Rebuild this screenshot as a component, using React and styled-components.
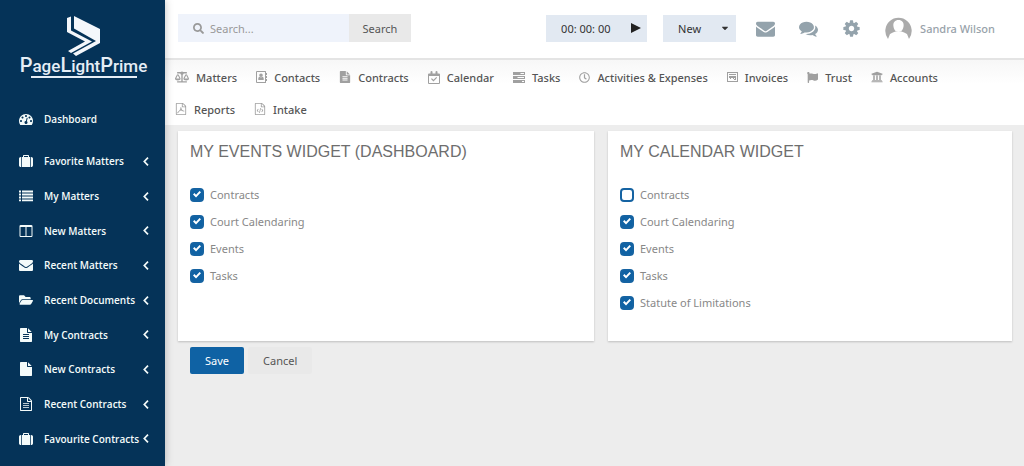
import { useState } from "react";
import styled, { createGlobalStyle } from "styled-components";
import {
  FaBalanceScale,
  FaCaretDown,
  FaFlag,
  FaFolderOpen,
  FaRegClock,
  FaSearch,
  FaUniversity,
} from "react-icons/fa";

const GlobalStyle = createGlobalStyle`
  * {
    box-sizing: border-box;
  }
  body {
    margin: 0;
    background: #ededed;
    font-family: "Noto Sans", "Open Sans", sans-serif;
    font-size: 11px;
    color: #555;
  }
  button, input {
    font: inherit;
    color: inherit;
  }
  button {
    border: 0;
    cursor: pointer;
  }
  a {
    color: inherit;
    text-decoration: none;
  }
  svg {
    flex-shrink: 0;
  }
`;

const Glyph = ({ d, size = 14, width = size, box = "0 0 1792 1792" }) => (
  <svg width={width} height={size} viewBox={box} fill="currentColor" fillRule="evenodd" aria-hidden="true">
    <path d={d} />
  </svg>
);

const paths = {
  gauge:
    "M384 1152q0-53-37.5-90.5t-90.5-37.5-90.5 37.5-37.5 90.5 37.5 90.5 90.5 37.5 90.5-37.5 37.5-90.5zm192-448q0-53-37.5-90.5t-90.5-37.5-90.5 37.5-37.5 90.5 37.5 90.5 90.5 37.5 90.5-37.5 37.5-90.5zm428 481l101-382q6-26-7.5-48.5t-38.5-29.5-48 6.5-30 39.5l-101 382q-60 5-107 43.5t-63 98.5q-20 77 20 146t117 89 146-20 89-117q16-60-6-117t-72-91zm660-33q0-53-37.5-90.5t-90.5-37.5-90.5 37.5-37.5 90.5 37.5 90.5 90.5 37.5 90.5-37.5 37.5-90.5zm-640-640q0-53-37.5-90.5t-90.5-37.5-90.5 37.5-37.5 90.5 37.5 90.5 90.5 37.5 90.5-37.5 37.5-90.5zm448 192q0-53-37.5-90.5t-90.5-37.5-90.5 37.5-37.5 90.5 37.5 90.5 90.5 37.5 90.5-37.5 37.5-90.5zm320 448q0 261-141 483-19 29-54 29h-1402q-35 0-54-29-141-221-141-483 0-182 71-348t191-286 286-191 348-71 348 71 286 191 191 286 71 348z",
  suitcase:
    "M640 384h512v-128h-512v128zm-352 0v1280h-64q-92 0-158-66t-66-158v-832q0-92 66-158t158-66h64zm1120 0v1280h-1024v-1280h128v-160q0-40 28-68t68-28h576q40 0 68 28t28 68v160h128zm384 224v832q0 92-66 158t-158 66h-64v-1280h64q92 0 158 66t66 158z",
  list: "M0 200h256v240H0zM384 200h1408v240H384zM0 580h256v240H0zM384 580h1408v240H384zM0 960h256v240H0zM384 960h1408v240H384zM0 1340h256v240H0zM384 1340h1408v240H384z",
  columns:
    "M224 1536h608v-1152h-640v1120q0 13 9.5 22.5t22.5 9.5zm1376-32v-1120h-640v1152h608q13 0 22.5-9.5t9.5-22.5zm128-1216v1216q0 66-47 113t-113 47h-1344q-66 0-113-47t-47-113v-1216q0-66 47-113t113-47h1344q66 0 113 47t47 113z",
  envelope:
    "M1792 710v794q0 66-47 113t-113 47h-1472q-66 0-113-47t-47-113v-794q44 49 101 87 362 246 497 345 57 42 92.5 65.5t94.5 48 110 24.5h2q51 0 110-24.5t94.5-48 92.5-65.5q170-123 498-345 57-39 100-87zm0-294q0 79-49 151t-122 123q-376 261-468 325-10 7-42.5 31t-54 38.5-52 32.5-57.5 27-50 9h-2q-23 0-50-9t-57.5-27-52-32.5-54-38.5-42.5-31q-91-64-262-182.5t-205-142.5q-62-42-117-115.5t-55-136.5q0-78 41.5-130t118.5-52h1472q65 0 112.5 47t47.5 113z",
  file: "M1596 476q14 14 28 36h-472v-472q22 14 36 28zm-476 164h544v1056q0 40-28 68t-68 28h-1344q-40 0-68-28t-28-68v-1600q0-40 28-68t68-28h800v544q0 40 28 68t68 28z",
  fileLines:
    "M1596 476q14 14 28 36h-472v-472q22 14 36 28zm-476 164h544v1056q0 40-28 68t-68 28h-1344q-40 0-68-28t-28-68v-1600q0-40 28-68t68-28h800v544q0 40 28 68t68 28zm160 736v-64q0-14-9-23t-23-9h-704q-14 0-23 9t-9 23v64q0 14 9 23t23 9h704q14 0 23-9t9-23zm0-256v-64q0-14-9-23t-23-9h-704q-14 0-23 9t-9 23v64q0 14 9 23t23 9h704q14 0 23-9t9-23zm0-256v-64q0-14-9-23t-23-9h-704q-14 0-23 9t-9 23v64q0 14 9 23t23 9h704q14 0 23-9t9-23z",
  fileOutline:
    "M1596 380q28 28 48 76t20 88v1152q0 40-28 68t-68 28h-1344q-40 0-68-28t-28-68v-1600q0-40 28-68t68-28h896q40 0 88 20t76 48zm-444-244v376h376q-10-29-22-41l-313-313q-12-12-41-22zm384 1528v-1024h-416q-40 0-68-28t-28-68v-416h-768v1536h1280z",
  comments:
    "M1408 768q0 139-94 257t-256.5 186.5-353.5 68.5q-86 0-176-16-124 88-278 128-36 9-86 16h-3q-11 0-20.5-8t-11.5-21q-1-3-1-6.5t.5-6.5 2-6l2.5-5 3.5-5.5 4-5 4.5-5 4-4.5q5-6 23-25t26-29.5 22.5-29 25-38.5 20.5-44q-124-72-195-177t-71-224q0-139 94-257t256.5-186.5 353.5-68.5 353.5 68.5 256.5 186.5 94 257zm384 256q0 120-71 224.5t-195 176.5q10 24 20.5 44t25 38.5 22.5 29 26 29.5 23 25q1 1 4 4.5t4.5 5 4 5 3.5 5.5l2.5 5 2 6 .5 6.5-1 6.5q-3 14-13 22t-22 7q-50-7-86-16-154-40-278-128-90 16-176 16-271 0-472-132 58 4 88 4 161 0 309-45t264-129q125-92 192-212t67-254q0-77-23-152 129 71 204 178t75 230z",
  cog: "M1152 896q0-106-75-181t-181-75-181 75-75 181 75 181 181 75 181-75 75-181zm512-109v222q0 12-8 23t-20 13l-185 28q-19 54-39 91 35 50 107 138 10 12 10 25t-9 23q-27 37-99 108t-94 71q-12 0-26-9l-138-108q-44 23-91 38-16 136-29 186-7 28-36 28h-222q-14 0-24.5-8.5t-11.5-21.5l-28-184q-49-16-90-37l-141 107q-10 9-25 9-14 0-25-11-126-114-165-168-7-10-7-23 0-12 8-23 15-21 51-66.5t54-70.5q-27-50-41-99l-183-27q-13-2-21-12.5t-8-23.5v-222q0-12 8-23t19-13l186-28q14-46 39-92-40-57-107-138-10-12-10-24 0-10 9-23 26-36 98.5-107.5t94.5-71.5q13 0 26 10l138 107q44-23 91-38 16-136 29-186 7-28 36-28h222q14 0 24.5 8.5t11.5 21.5l28 184q49 16 90 37l142-107q9-9 24-9 13 0 25 10 129 119 165 170 7 8 7 22 0 12-8 23-15 21-51 66.5t-54 70.5q26 50 41 98l183 28q13 2 21 12.5t8 23.5z",
  tasks:
    "M0 2h12v3H0zM0 6h12v3H0zM0 10h12v3H0zM7.500 3v1H11V3zM4.500 7v1H11V7zM9 11v1h2v-1z",
  invoice:
    "M0 2h11v10H0zM1 3v8h9V3zM2 4h7v1H2zM2 6h7v3H8V8H7v1H6V8H4v1H3V8H2zM7 9h2v1H7z",
  contacts:
    "M1 1h8.500q.5 0 .5.500V3h1v2h-1v1h1v2h-1v1h1v2h-1v1.500q0 .5-.5.500H1q-1 0-1-1V2q0-1 1-1zM1 2v10h8V2zM5 3.500a1.700 1.700 0 0 1 0 3.600 1.700 1.700 0 0 1 0-3.600zM2.300 10V8.500Q2.500 7 3.500 6.800q1.500 1 3 0 1 .2 1.200 1.700V10z",
  calendar:
    "M1 2.500h1.500V1q0-1 1-1t1 1v1.500h3V1q0-1 1-1t1 1v1.500H11q1 0 1 1V12q0 1-1 1H1q-1 0-1-1V3.500q0-1 1-1zM1 5v7h10V5zM3 8l.8-.8L5.500 8.800 8.300 6l.8.800-3.600 3.600z",
};

const lines = "M512 800h768v96H512zM512 1056h768v96H512zM512 1312h768v96H512z";
const acrobat =
  "M820 640h110q50 260 120 380 120 130 340 130v110q-220 10-420-90-180 20-310 80-130 260-260 280-80 0-60-90 60-120 250-230 150-210 230-420-20-80 0-150zm60 330l-110 180 210-50z";
const code =
  "M600 860l90 70-140 190 140 190-90 70-190-260zM1190 860l-90 70 140 190-140 190 90 70 190-260zM930 760l110 20-170 720-110-20z";

const Layout = styled.div`
  display: flex;
  min-height: 100vh;
`;

const Sidebar = styled.aside`
  display: flex;
  flex-direction: column;
  flex: 0 0 165px;
  min-width: 0;
  padding-bottom: 10px;
  background: #053358;
  color: #f4fbfa;
  box-shadow: 0 0 8px rgba(0, 0, 0, 0.25);
  z-index: 1;
`;

const Logo = styled.a`
  display: flex;
  flex-direction: column;
  align-items: center;
  height: 101px;
  padding: 15px 0 0 2px;
`;

const LogoName = styled.span`
  font-family: Roboto, sans-serif;
  font-size: 17px;
  font-weight: 500;
  line-height: 16px;
  white-space: nowrap;
  color: #e6eef6;

  b {
    font-size: 20px;
    font-weight: 500;
  }
`;

const LogoRule = styled.span`
  width: 106px;
  height: 2px;
  margin-top: 2px;
  background: #e6eef6;
`;

const SideLink = styled.a`
  display: grid;
  grid-template-columns: 25px 1fr 6px;
  align-items: center;
  flex: ${({ $fixed }) => ($fixed ? "0 0 35px" : "1 0 30px")};
  padding: 0 16px 0 19px;
  font-family: "Open Sans", "Noto Sans", sans-serif;
  font-size: 10px;
  font-weight: 600;
  white-space: nowrap;
`;

const SideMenu = styled.nav`
  display: flex;
  flex-direction: column;
  flex: 1;
`;

const SideGroup = styled.div`
  display: flex;
  flex-direction: column;
  flex: 1;
  margin-top: 8px;
`;

const Page = styled.div`
  flex: 1;
  min-width: 0;
`;

const TopBar = styled.header`
  display: flex;
  align-items: center;
  height: 60px;
  padding: 0 29px 2px 13px;
  background: #fff;
  border-bottom: 2px solid #e4e4e4;
`;

const SearchForm = styled.form`
  display: flex;
  margin-right: auto;
`;

const SearchField = styled.label`
  display: flex;
  align-items: center;
  gap: 6px;
  width: 171px;
  height: 28px;
  padding-left: 15px;
  background: #eff3fb;
  color: #999;

  input {
    flex: 1;
    min-width: 0;
    padding: 0;
    border: 0;
    outline: 0;
    background: none;
  }
  input::placeholder {
    color: #999;
  }
`;

const SearchButton = styled.button`
  width: 62px;
  padding: 0;
  background: #e9e9e9;
`;

const ToolButton = styled.button`
  display: flex;
  align-items: center;
  justify-content: space-between;
  width: ${({ $width }) => $width}px;
  height: 27px;
  margin-right: ${({ $gap }) => $gap}px;
  padding: 0 6px 0 15px;
  background: #e2e9f2;
  color: #333;
`;

const IconButton = styled.button`
  display: flex;
  align-items: center;
  margin-right: 24px;
  padding: 0;
  background: none;
  color: #94a3ac;
`;

const User = styled.a`
  display: flex;
  align-items: center;
  gap: 8px;
  color: #98a2aa;
  font-weight: 500;
`;

const MainNav = styled.nav`
  display: flex;
  flex-wrap: wrap;
  column-gap: 19px;
  padding: 1px 60px 0 10px;
  background: linear-gradient(#f7f7f7, #fff 24px);
`;

const NavLink = styled.a`
  display: flex;
  align-items: center;
  gap: 7px;
  height: 32px;
  font-weight: 500;

  svg {
    color: #a0a0a0;
  }
`;

const Widgets = styled.main`
  display: grid;
  grid-template-columns: 416fr 404fr;
  gap: 14px;
  padding: 6px 12px 6px 13px;
`;

const Card = styled.section`
  min-height: 210px;
  padding-bottom: 24px;
  background: #fff;
  box-shadow: 0 1px 2px rgba(0, 0, 0, 0.2);
`;

const CardTitle = styled.h2`
  margin: 0 0 8px;
  padding: 0 12px;
  font-family: "Liberation Sans", Arial, sans-serif;
  font-size: 16px;
  font-weight: 400;
  line-height: 42px;
  color: #6e6e6e;
`;

const Option = styled.label`
  display: flex;
  align-items: center;
  gap: 6px;
  height: 27px;
  padding-left: 12px;
  color: #888;
`;

const Checkbox = styled.input`
  appearance: none;
  display: grid;
  place-items: center;
  width: 14px;
  height: 14px;
  margin: 0;
  border: 2px solid #1563a2;
  border-radius: 4px;
  background: #fff;

  &:checked {
    background: #0f62a4;
  }
  &:checked::after {
    content: "";
    width: 8px;
    height: 7px;
    background: #fff;
    clip-path: polygon(0 50%, 18% 30%, 38% 52%, 82% 0, 100% 18%, 38% 92%);
  }
`;

const Actions = styled.div`
  display: flex;
  gap: 4px;
  padding-left: 25px;
`;

const ActionButton = styled.button`
  height: 27px;
  padding: 0 15px;
  border-radius: 2px;
  background: ${({ $primary }) => ($primary ? "#0f62a4" : "#e9e9e9")};
  color: ${({ $primary }) => ($primary ? "#fff" : "#555")};
`;

const sideItems = [
  ["Favorite Matters", <Glyph d={paths.suitcase} />],
  ["My Matters", <Glyph d={paths.list} />],
  ["New Matters", <Glyph d={paths.columns} />],
  ["Recent Matters", <Glyph d={paths.envelope} />],
  ["Recent Documents", <FaFolderOpen size={14} />],
  ["My Contracts", <Glyph d={paths.fileLines} />],
  ["New Contracts", <Glyph d={paths.file} />],
  ["Recent Contracts", <Glyph d={paths.fileOutline + lines} />],
  ["Favourite Contracts", <Glyph d={paths.suitcase} />],
];

const navItems = [
  ["Matters", <FaBalanceScale size={14} />],
  ["Contacts", <Glyph d={paths.contacts} size={14} width={11} box="0 0 11 14" />],
  ["Contracts", <Glyph d={paths.fileLines} size={12} />],
  ["Calendar", <Glyph d={paths.calendar} size={13} width={12} box="0 0 12 13" />],
  ["Tasks", <Glyph d={paths.tasks} size={14} width={12} box="0 0 12 14" />],
  ["Activities & Expenses", <FaRegClock size={11} />],
  ["Invoices", <Glyph d={paths.invoice} size={14} width={11} box="0 0 11 14" />],
  ["Trust", <FaFlag size={11} />],
  ["Accounts", <FaUniversity size={12} />],
  ["Reports", <Glyph d={paths.fileOutline + acrobat} size={12} />],
  ["Intake", <Glyph d={paths.fileOutline + code} size={12} />],
];

const Chevron = () => (
  <svg width="6" height="9" viewBox="0 0 6 9" fill="none" stroke="currentColor" strokeWidth="1.7" aria-hidden="true">
    <path d="M5 .7 1.300 4.500 5 8.300" />
  </svg>
);

function LogoMark() {
  return (
    <svg width="36" height="42" viewBox="0 0 36 42" fill="#f4f7fb" aria-hidden="true">
      <path d="M8 1 34 14V28L10 41 7 38.500 30 26 8 13.500Z" />
      <path d="M1 3 5 1.500V15.500L26 26.500 5 38 2 36 19 26.500 1 17Z" />
    </svg>
  );
}

function Avatar() {
  return (
    <svg width="27" height="24" viewBox="0 0 27 24" aria-hidden="true">
      <path d="M3 23A13.200 13.200 0 1 1 24 23L22 18Q19 16 16.500 15.500H10.500Q8 16 5 18Z" fill="#ababab" />
      <path d="M13.500 4C17 4 19 6.500 18.600 10c-.3 3-2 6-5.100 6S8.700 13 8.400 10C8 6.500 10 4 13.500 4Z" fill="#fff" />
    </svg>
  );
}

function Widget({ title, options, unchecked = [] }) {
  const [checked, setChecked] = useState(() => options.filter((name) => !unchecked.includes(name)));

  function toggle(name) {
    setChecked((prev) =>
      prev.includes(name) ? prev.filter((item) => item !== name) : [...prev, name]
    );
  }

  return (
    <Card>
      <CardTitle>{title}</CardTitle>
      {options.map((name) => (
        <Option key={name}>
          <Checkbox type="checkbox" checked={checked.includes(name)} onChange={() => toggle(name)} />
          {name}
        </Option>
      ))}
    </Card>
  );
}

function App() {
  return (
    <>
      <GlobalStyle />
      <Layout>
        <Sidebar>
          <Logo href="#">
            <LogoMark />
            <LogoName>
              <b>P</b>age<b>L</b>ight<b>P</b>rime
            </LogoName>
            <LogoRule />
          </Logo>
          <SideMenu>
            <SideLink href="#" $fixed>
              <Glyph d={paths.gauge} />
              Dashboard
            </SideLink>
            <SideGroup>
              {sideItems.map(([label, icon]) => (
                <SideLink href="#" key={label}>
                  {icon}
                  {label}
                  <Chevron />
                </SideLink>
              ))}
            </SideGroup>
          </SideMenu>
        </Sidebar>
        <Page>
          <TopBar>
            <SearchForm onSubmit={(e) => e.preventDefault()}>
              <SearchField>
                <FaSearch size={11} />
                <input type="text" placeholder="Search..." aria-label="Search" />
              </SearchField>
              <SearchButton>Search</SearchButton>
            </SearchForm>
            <ToolButton $width={101} $gap={16}>
              00: 00: 00
              <svg width="10" height="10" viewBox="0 0 10 10" aria-hidden="true">
                <path d="M0 0 10 5 0 10Z" fill="#222" />
              </svg>
            </ToolButton>
            <ToolButton $width={73} $gap={20} aria-haspopup="menu">
              New
              <FaCaretDown size={10} />
            </ToolButton>
            <IconButton aria-label="Mail">
              <Glyph d={paths.envelope} size={19} />
            </IconButton>
            <IconButton aria-label="Messages">
              <Glyph d={paths.comments} size={19} />
            </IconButton>
            <IconButton aria-label="Settings">
              <Glyph d={paths.cog} size={19} />
            </IconButton>
            <User href="#">
              <Avatar />
              Sandra Wilson
            </User>
          </TopBar>
          <MainNav>
            {navItems.map(([label, icon]) => (
              <NavLink href="#" key={label}>
                {icon}
                {label}
              </NavLink>
            ))}
          </MainNav>
          <Widgets>
            <Widget
              title="MY EVENTS WIDGET (DASHBOARD)"
              options={["Contracts", "Court Calendaring", "Events", "Tasks"]}
            />
            <Widget
              title="MY CALENDAR WIDGET"
              options={["Contracts", "Court Calendaring", "Events", "Tasks", "Statute of Limitations"]}
              unchecked={["Contracts"]}
            />
          </Widgets>
          <Actions>
            <ActionButton $primary>Save</ActionButton>
            <ActionButton>Cancel</ActionButton>
          </Actions>
        </Page>
      </Layout>
    </>
  );
}

export default App;
